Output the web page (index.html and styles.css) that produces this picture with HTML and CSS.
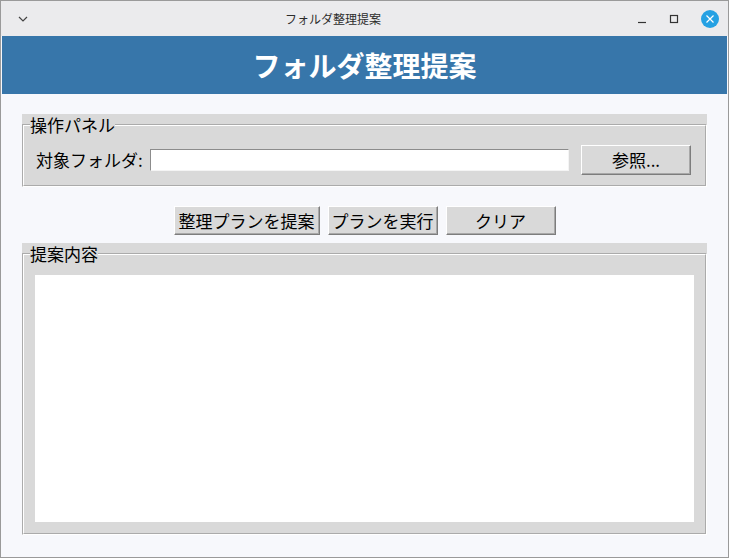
FILE: index.html
```html
<!DOCTYPE html>
<html lang="ja">
<head>
<meta charset="utf-8">
<title>フォルダ整理提案</title>
<link rel="stylesheet" href="styles.css">
</head>
<body>
<div class="window">
  <div class="titlebar">
    <svg class="chev" width="10" height="6" viewBox="0 0 10 6"><path d="M1 1 L5 5 L9 1" fill="none" stroke="#444" stroke-width="1.2"/></svg>
    <span class="wtitle">フォルダ整理提案</span>
    <span class="spacer"></span>
    <svg class="ctl" width="10" height="10" viewBox="0 0 10 10"><path d="M1 8.5 H9" stroke="#333" stroke-width="1.2"/></svg>
    <svg class="ctl" width="10" height="10" viewBox="0 0 10 10"><rect x="1.5" y="1.5" width="7" height="7" fill="none" stroke="#333" stroke-width="1.2"/></svg>
    <svg class="close" width="18" height="18" viewBox="0 0 18 18"><circle cx="9" cy="9" r="9" fill="#25a1e3"/><path d="M5.5 5.5 L12.5 12.5 M12.5 5.5 L5.5 12.5" stroke="#fff" stroke-width="1.2"/></svg>
  </div>
  <div class="header">フォルダ整理提案</div>
  <div class="content">
    <div class="group">
      <fieldset class="frame frame-ops">
        <legend>操作パネル</legend>
        <div class="row">
          <span class="lbl">対象フォルダ:</span>
          <div class="entry"></div>
          <button class="btn browse">参照...</button>
        </div>
      </fieldset>
    </div>
    <div class="actions">
      <button class="btn w146">整理プランを提案</button>
      <button class="btn w110">プランを実行</button>
      <button class="btn w110">クリア</button>
    </div>
    <div class="group">
      <fieldset class="frame frame-out">
        <legend>提案内容</legend>
        <div class="textbox"></div>
      </fieldset>
    </div>
  </div>
</div>
</body>
</html>
```
FILE: styles.css
```css
* { box-sizing: border-box; }
html, body { margin: 0; padding: 0; }
body {
  width: 729px;
  height: 558px;
  overflow: hidden;
  font-family: "Noto Sans CJK JP", "Noto Sans", sans-serif;
  background: #f7f8fc;
}
.window {
  width: 729px;
  height: 558px;
  border: 1px solid #9a9a9a;
  background: #f7f8fc;
  display: flex;
  flex-direction: column;
}
.titlebar {
  height: 35px;
  background: #ebebed;
  display: flex;
  align-items: center;
  color: #2b2b2b;
  font-size: 12px;
}
.chev { margin-left: 17px; margin-top: 1px; }
.wtitle { margin-left: 257px; line-height: 35px; }
.spacer { flex: 1; }
.ctl { margin-right: 22px; }
.close { margin-left: 0; margin-right: 9px; }
.header {
  height: 58px;
  margin: 0 1px;
  background: #3776aa;
  color: #fff;
  font-weight: bold;
  font-size: 28px;
  line-height: 58px;
  text-align: center;
}
.content {
  padding: 20px 21px 0 21px;
  font-size: 17px;
  color: #000;
}
.group { background: #d9d9d9; }
.frame {
  margin: 0;
  border: 2px groove #ffffff;
  min-width: 0;
}
.frame legend {
  padding: 0;
  line-height: 22px;
  height: 22px;
}
.frame-ops { padding: 9px 14px 10px 6px; }
.row {
  display: flex;
  align-items: center;
  height: 30px;
  margin-left: 6px;
}
.lbl { width: 114px; line-height: 22px; white-space: nowrap; }
.entry {
  flex: 1;
  height: 22px;
  background: #fff;
  border: 1px solid;
  border-color: #8c8c8c #f4f4f4 #f4f4f4 #8c8c8c;
}
.btn {
  font-family: inherit;
  font-size: 17px;
  color: #000;
  background: #d9d9d9;
  border: 1px solid;
  border-color: #ffffff #7d7d7d #7d7d7d #ffffff;
  box-shadow: inset -1px -1px 0 #a8a8a8;
  padding: 0;
  margin: 0;
  line-height: 26px;
}
.browse { width: 110px; height: 30px; margin-left: 12px; }
.actions {
  display: flex;
  justify-content: center;
  gap: 8px;
  margin: 19px 0 8px 0;
}
.actions .btn { height: 29px; }
.w146 { width: 146px; }
.w110 { width: 110px; }
.frame-out { padding: 10px 11px 11px 6px; }
.textbox {
  margin-left: 5px;
  height: 247px;
  background: #fff;
}
```
